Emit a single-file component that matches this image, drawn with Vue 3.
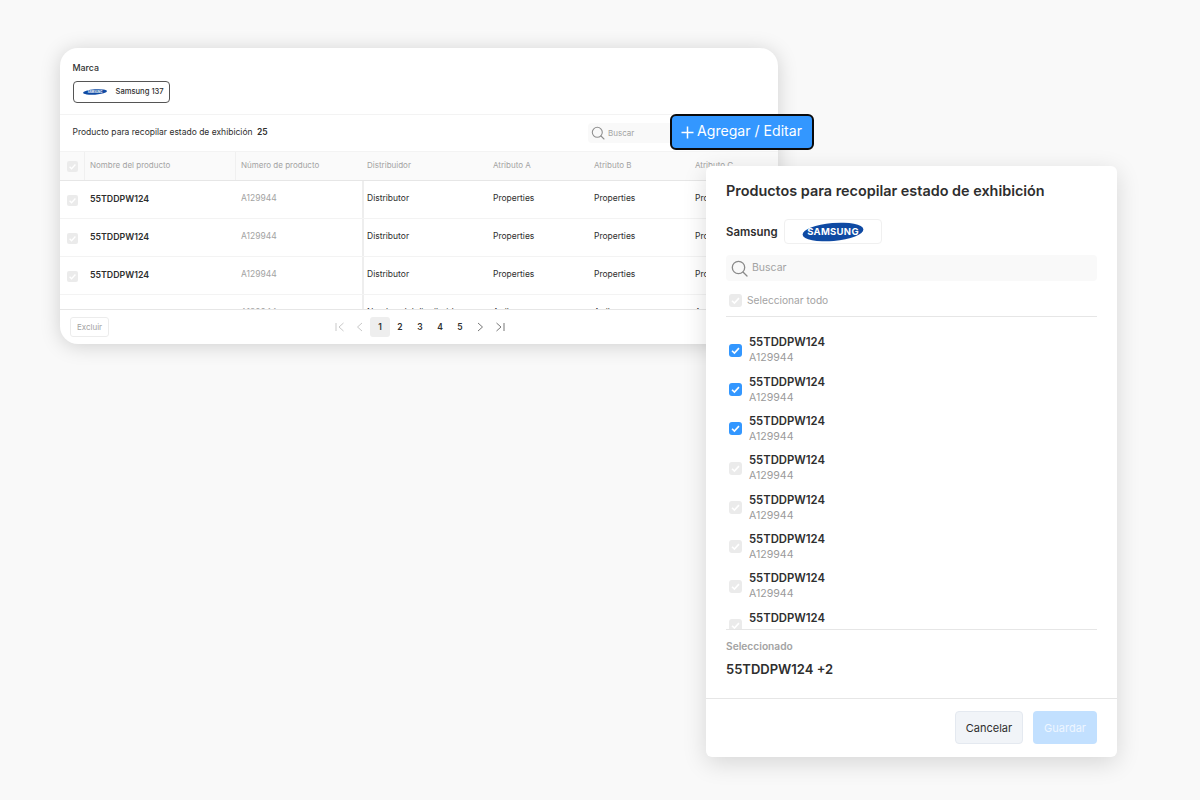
<script setup>
const columns = ['Distribuidor', 'Atributo A', 'Atributo B', 'Atributo C']
const rows = [
  { dist: 'Distributor', a: 'Properties', b: 'Properties', c: 'Properties' },
  { dist: 'Distributor', a: 'Properties', b: 'Properties', c: 'Properties' },
  { dist: 'Distributor', a: 'Properties', b: 'Properties', c: 'Properties' },
  { dist: 'Nombre del distribuidor', a: 'Atributo', b: 'Atributo', c: 'Atributo' }
]
const items = [true, true, true, false, false, false, false, false]
const pages = [1, 2, 3, 4, 5]
</script>

<template>
  <div class="page">
    <section class="card">
      <div class="brand">
        <div class="brand-label">Marca</div>
        <div class="chip">
          <svg class="logo-sm" viewBox="0 0 60 18">
            <ellipse cx="30" cy="9" rx="30" ry="6.6" transform="rotate(-4 30 9)" fill="#0f4aa3" />
            <text x="30" y="11.4" text-anchor="middle" class="logo-text">SAMSUNG</text>
          </svg>
          <span>Samsung 137</span>
        </div>
      </div>

      <div class="toolbar">
        <div class="count">Producto para recopilar estado de exhibición <b>25</b></div>
        <div class="search-sm">
          <svg width="14" height="14" viewBox="0 0 14 14" fill="none" stroke="#8f8f8f" stroke-width="1.1">
            <circle cx="6.3" cy="6.3" r="5" />
            <path d="M10 10l3 3" stroke-linecap="round" />
          </svg>
          <span>Buscar</span>
        </div>
      </div>

      <div class="table">
        <div class="tr head">
          <div class="td check-cell"><span class="check off"><svg viewBox="0 0 12 12"><path d="M2.8 6.2l2.2 2.2 4.2-4.6" /></svg></span></div>
          <div class="td name-col">Nombre del producto</div>
          <div class="td num-col">Número de producto</div>
          <div v-for="c in columns" :key="c" class="td">{{ c }}</div>
        </div>
        <div v-for="(r, i) in rows" :key="i" class="tr body">
          <div class="td check-cell"><span class="check off"><svg viewBox="0 0 12 12"><path d="M2.8 6.2l2.2 2.2 4.2-4.6" /></svg></span></div>
          <div class="td name">55TDDPW124</div>
          <div class="td num">A129944</div>
          <div class="td dist">{{ r.dist }}</div>
          <div class="td">{{ r.a }}</div>
          <div class="td">{{ r.b }}</div>
          <div class="td">{{ r.c }}</div>
        </div>
      </div>

      <div class="footer">
        <button class="exclude">Excluir</button>
        <div class="pager">
          <span class="pg"><svg viewBox="0 0 12 12"><path d="M2 2v8M9.5 2L5 6l4.5 4" stroke="#c9c9c9" /></svg></span>
          <span class="pg"><svg viewBox="0 0 12 12"><path d="M8 2L3.5 6 8 10" stroke="#c9c9c9" /></svg></span>
          <span v-for="p in pages" :key="p" class="pg num-pg" :class="{ current: p === 1 }">{{ p }}</span>
          <span class="pg"><svg viewBox="0 0 12 12"><path d="M4 2l4.5 4L4 10" stroke="#777" /></svg></span>
          <span class="pg"><svg viewBox="0 0 12 12"><path d="M2.5 2L7 6l-4.5 4M10 2v8" stroke="#777" /></svg></span>
        </div>
      </div>
    </section>

    <button class="add-btn">
      <svg width="13" height="13" viewBox="0 0 13 13" stroke="#fff" stroke-width="1.5"><path d="M6.5 0.5v12M0.5 6.5h12" /></svg>
      <span>Agregar / Editar</span>
    </button>

    <section class="modal">
      <div class="modal-main">
        <h2>Productos para recopilar estado de exhibición</h2>
        <div class="brand-row">
          <span>Samsung</span>
          <div class="logo-box">
            <svg class="logo-lg" viewBox="0 0 62 22">
              <ellipse cx="31" cy="11" rx="30.5" ry="9" transform="rotate(-5 31 11)" fill="#0f4aa3" />
              <text x="31" y="14.2" text-anchor="middle" class="logo-text-lg">SAMSUNG</text>
            </svg>
          </div>
        </div>
        <div class="search">
          <svg width="17" height="17" viewBox="0 0 17 17" fill="none" stroke="#8a8a8a" stroke-width="1.3">
            <circle cx="7.5" cy="7.5" r="6.2" />
            <path d="M12.2 12.2l3.8 3.8" stroke-linecap="round" />
          </svg>
          <span>Buscar</span>
        </div>
        <div class="select-all">
          <span class="check off big"><svg viewBox="0 0 12 12"><path d="M2.8 6.2l2.2 2.2 4.2-4.6" /></svg></span>
          <span>Seleccionar todo</span>
        </div>
        <div class="list">
          <div v-for="(on, i) in items" :key="i" class="item">
            <span class="check big" :class="on ? 'on' : 'off'"><svg viewBox="0 0 12 12"><path d="M2.8 6.2l2.2 2.2 4.2-4.6" /></svg></span>
            <div>
              <div class="item-name">55TDDPW124</div>
              <div class="item-code">A129944</div>
            </div>
          </div>
        </div>
        <div class="selected">
          <div class="selected-label">Seleccionado</div>
          <div class="selected-value">55TDDPW124 +2</div>
        </div>
      </div>
      <div class="modal-foot">
        <button class="cancel">Cancelar</button>
        <button class="save">Guardar</button>
      </div>
    </section>
  </div>
</template>

<style>
html, body { margin: 0; }
</style>

<style scoped>
.page {
  position: relative;
  width: 1200px;
  height: 800px;
  overflow: hidden;
  background: #f9f9f9;
  font-family: Inter, "Liberation Sans", sans-serif;
  color: #2e2e2e;
}

button { font-family: inherit; cursor: pointer; }

.card {
  position: absolute;
  left: 60px;
  top: 48px;
  width: 718px;
  height: 296px;
  display: flex;
  flex-direction: column;
  background: #fff;
  border-radius: 18px;
  overflow: hidden;
  box-shadow: 0 2px 20px rgba(0, 0, 0, 0.17);
}

.brand {
  height: 67px;
  padding: 13.5px 12.5px 0;
  box-sizing: border-box;
  border-bottom: 1px solid #f3f3f3;
}
.brand-label { font-size: 8.8px; font-weight: 500; line-height: 11px; }
.chip {
  margin-top: 8.5px;
  width: 97px;
  height: 22px;
  box-sizing: border-box;
  display: flex;
  align-items: center;
  gap: 9px;
  padding-left: 9px;
  border: 1.2px solid #555;
  border-radius: 4px;
  font-size: 7.6px;
  font-weight: 500;
}
.chip span { padding-bottom: 1px; }
.logo-sm { width: 24px; height: 8px; }
.logo-text { fill: #fff; font-size: 7px; font-weight: 700; }

.toolbar {
  height: 36px;
  flex: none;
  display: flex;
  align-items: center;
  justify-content: space-between;
  padding: 0 0 0 12.5px;
  box-sizing: border-box;
}
.count { font-size: 8.5px; padding-bottom: 2px; }
.count b { font-weight: 600; margin-left: 2px; }
.search-sm {
  width: 190px;
  height: 20px;
  box-sizing: border-box;
  display: flex;
  align-items: center;
  gap: 3px;
  padding-left: 3px;
  background: #f9f9f9;
  border-radius: 4px;
  font-size: 8px;
  color: #a3a3a3;
}

.table { flex: 1; overflow: hidden; font-size: 8.5px; }
.tr {
  display: grid;
  grid-template-columns: 25px 151px 126px 126px 101px 101px 88px;
  box-sizing: border-box;
}
.td {
  display: flex;
  align-items: center;
  padding-left: 5px;
  white-space: nowrap;
  overflow: hidden;
  min-width: 0;
}
.head {
  height: 30px;
  background: #fafafa;
  border-top: 1px solid #f3f3f3;
  border-bottom: 1px solid #e6e6e6;
  color: #a3a3a3;
  font-size: 8px;
}
.head .td { padding-bottom: 2px; }
.head .check-cell { padding: 0; }
.head .check-cell, .head .name-col { border-right: 1px solid #f0f0f0; }
.body { height: 38px; border-bottom: 1px solid #f3f3f3; }
.body .td { padding-bottom: 4px; }
.check-cell { justify-content: center; padding-left: 0; }
.body .check-cell { padding: 1px 0 0; }
.body .name { font-size: 8.8px; font-weight: 600; padding-bottom: 2px; }
.num { color: #a3a3a3; }
.dist { border-left: 2px solid #eeeeee; padding-left: 3px; }

.check {
  width: 11px;
  height: 11px;
  border-radius: 2px;
  display: inline-flex;
  flex: none;
}
.check svg { width: 100%; height: 100%; fill: none; stroke: #fff; stroke-width: 1.5; }
.check.off { background: #ebebeb; }
.check.on { background: #3397ff; }
.check.big { width: 13px; height: 13px; border-radius: 3px; }

.footer {
  height: 35px;
  flex: none;
  box-sizing: border-box;
  padding: 0 10px;
  border-top: 1px solid #e6e6e6;
  display: grid;
  grid-template-columns: 1fr auto 1fr;
  align-items: center;
}
.exclude {
  justify-self: start;
  width: 39px;
  height: 20px;
  padding: 0;
  background: #fff;
  border: 1px solid #ececec;
  border-radius: 3px;
  font-size: 8px;
  color: #a3a3a3;
}
.pager { display: flex; margin-left: 2px; }
.pg {
  width: 20px;
  height: 20px;
  display: flex;
  align-items: center;
  justify-content: center;
  font-size: 8.5px;
  font-weight: 600;
  border-radius: 3px;
}
.pg svg { width: 12px; height: 12px; fill: none; stroke-width: 1; }
.pg.current { background: #eeeeee; }

.add-btn {
  position: absolute;
  left: 670px;
  top: 114px;
  width: 144px;
  height: 36px;
  display: flex;
  align-items: center;
  justify-content: center;
  gap: 3px;
  padding: 0;
  background: #3397ff;
  border: 2px solid #0b0b0b;
  border-radius: 6px;
  color: #fff;
  font-size: 14.1px;
}
.add-btn span { padding-bottom: 3px; }
.add-btn svg { margin-left: -1px; }

.modal {
  position: absolute;
  left: 706px;
  top: 166px;
  width: 411px;
  height: 591px;
  display: flex;
  flex-direction: column;
  background: #fff;
  border-radius: 6px;
  box-shadow: 0 6px 24px rgba(0, 0, 0, 0.14);
}
.modal-main {
  flex: 1;
  padding: 15px 20px 0;
  min-height: 0;
}
h2 {
  margin: 0;
  font-size: 14.4px;
  line-height: 19px;
  font-weight: 600;
}
.brand-row {
  margin-top: 19px;
  display: flex;
  align-items: center;
  gap: 6px;
  font-size: 11.4px;
  font-weight: 600;
}
.logo-box {
  width: 98px;
  height: 25px;
  box-sizing: border-box;
  border: 1px solid #f0f0f0;
  border-radius: 4px;
  display: flex;
  align-items: center;
  justify-content: center;
}
.logo-lg { width: 62px; height: 22px; }
.logo-text-lg { fill: #fff; font-size: 9.5px; font-weight: 700; letter-spacing: 0.3px; }

.search {
  margin-top: 11px;
  height: 26px;
  width: 371px;
  box-sizing: border-box;
  display: flex;
  align-items: center;
  gap: 4px;
  padding-left: 5px;
  background: #f9f9f9;
  border-radius: 4px;
  font-size: 10.5px;
  color: #a3a3a3;
}
.search span { padding-bottom: 2px; }
.select-all {
  height: 36px;
  width: 371px;
  box-sizing: border-box;
  display: flex;
  align-items: center;
  gap: 5px;
  padding: 3px 0 0 3px;
  border-bottom: 1px solid #e6e6e6;
  font-size: 10.2px;
  color: #a3a3a3;
}

.list {
  height: 313px;
  width: 371px;
  box-sizing: border-box;
  overflow: hidden;
  padding: 13.5px 0 0 3px;
  border-bottom: 1px solid #e6e6e6;
}
.item {
  height: 39.36px;
  display: flex;
  align-items: center;
  gap: 7px;
}
.item-name { font-size: 11.3px; font-weight: 600; line-height: 16px; }
.item-code { font-size: 10.6px; line-height: 16px; color: #9a9a9a; }

.selected { padding-top: 9.5px; }
.selected-label { font-size: 10.2px; font-weight: 600; line-height: 13px; color: #a3a3a3; }
.selected-value { margin-top: 8px; font-size: 13px; font-weight: 600; line-height: 16px; }

.modal-foot {
  height: 59px;
  flex: none;
  box-sizing: border-box;
  display: flex;
  justify-content: flex-end;
  align-items: center;
  gap: 10px;
  padding: 0 20px 1px;
  border-top: 1px solid #e6e6e6;
}
.cancel {
  width: 68px;
  height: 33px;
  padding: 0;
  background: #f1f4f8;
  border: 1px solid #e4e9f0;
  border-radius: 4px;
  font-size: 11px;
  color: #2e2e2e;
}
.save {
  width: 64px;
  height: 33px;
  padding: 0;
  background: #c2e0ff;
  border: 0;
  border-radius: 4px;
  font-size: 11px;
  color: #eef6ff;
}
</style>
